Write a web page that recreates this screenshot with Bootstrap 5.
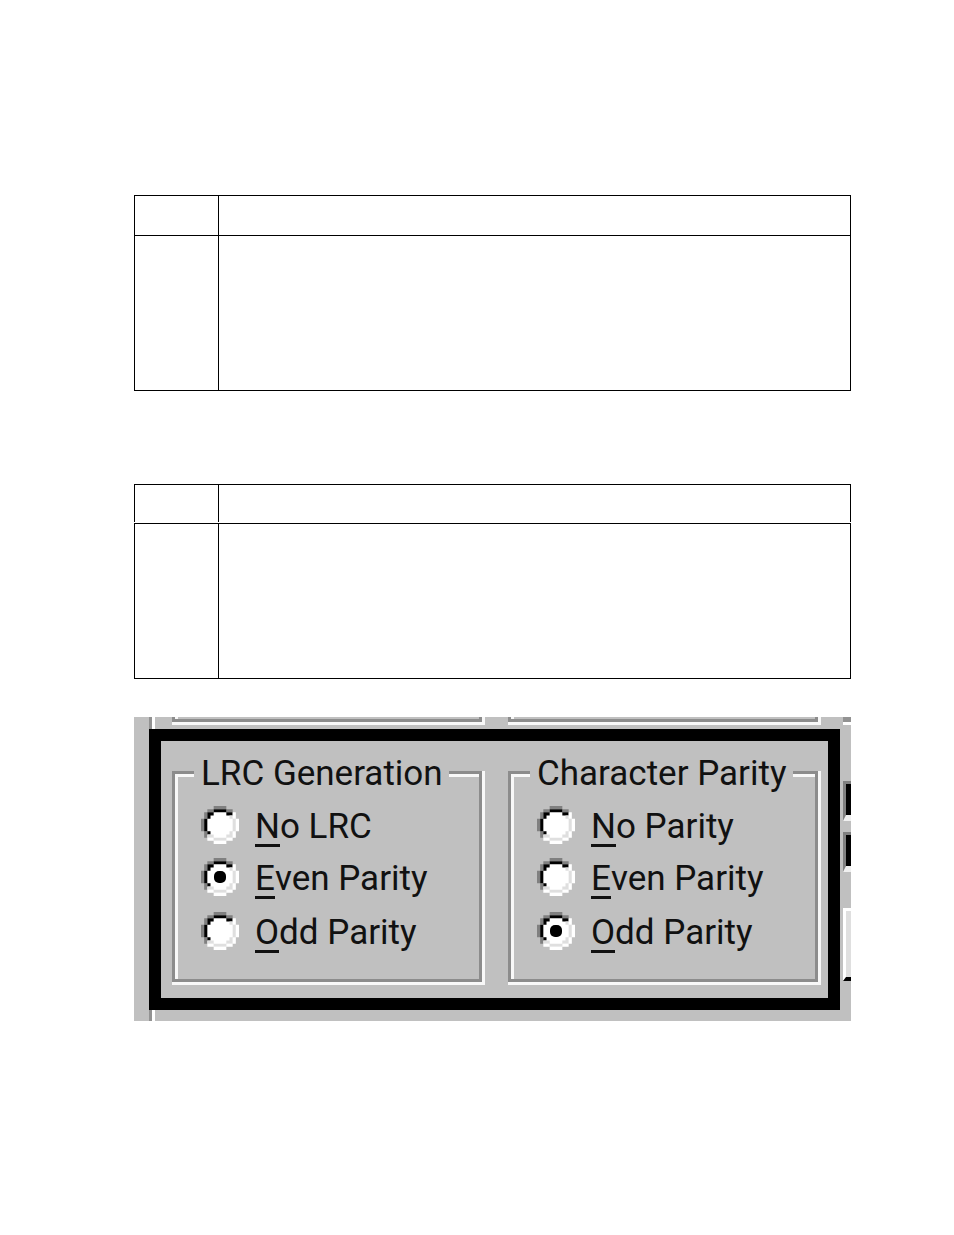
<!DOCTYPE html>
<html lang="en">
<head>
<meta charset="utf-8">
<meta name="viewport" content="width=device-width, initial-scale=1">
<title>LRC Generation and Character Parity</title>
<link href="https://cdn.jsdelivr.net/npm/bootstrap@5.3.0/dist/css/bootstrap.min.css" rel="stylesheet">
<style>
  body { background: #fff; color: #000; }
  .sheet { padding: 195px 103px 214px 134px; }

  .ruled { width: 100%; border-collapse: separate; border-spacing: 0; table-layout: fixed; border: 0 solid #000; border-bottom-width: 1px; }
  .ruled .key-col { width: 84px; }
  .ruled th, .ruled td { border: solid #000; border-width: 1px 0 0 1px; padding: 0; }
  .ruled th:last-child, .ruled td:last-child { border-right-width: 1px; }
  .ruled th { height: 40px; }
  .ruled td { height: 155px; }
  .ruled-first { margin-bottom: 93px; }
  .ruled-second { margin-bottom: 38px; }
  /* the header's upright rules stop just above the row below */
  .ruled-second th, .ruled-second th:last-child {
    height: 39px; border-width: 1px 0 0;
    background: linear-gradient(#000, #000) left top / 1px calc(100% - 1px) no-repeat, linear-gradient(#000, #000) right top / var(--end, 0) calc(100% - 1px) no-repeat;
  }
  .ruled-second th:last-child { --end: 1px; }

  .win { background: #c0c0c0; font-family: Roboto, sans-serif; font-size: 35px; line-height: 46px; color: #111; }
  .win-left { width: 15px; }
  .win-main { flex: 1 1 0; min-width: 0; }
  .win-right { width: 11px; padding-left: 3px; }
  .strip, .strip-bottom { border-left: 3px solid #929292; box-shadow: inset 3px 0 #fff; }
  .strip { height: 12px; padding: 0 19px 0 20px; gap: 23px; }
  .strip-bottom { height: 11px; }
  .etched {
    flex: 1 1 0; min-width: 0; border: 6px solid #808080;
    border-image: url("data:image/svg+xml,%3Csvg xmlns='http://www.w3.org/2000/svg' width='30' height='30' fill-rule='evenodd'%3E%3Cpath fill='%23f8f8f8' d='M0 0h30v30H0zM6 6v18h18V6z'/%3E%3Cpath fill='%238c8c8c' d='M0 0h27v27H0zM3 3v21h21V3z'/%3E%3C/svg%3E") 6;
  }
  .box-end { height: 8px; border-top: 0; }

  .marked { border: 12px solid #000; padding: 10px 7px 13px 11px; gap: 23px; }
  .group { padding: 0 0 20px 23px; }
  .group legend { font-size: inherit; line-height: inherit; margin: 0 0 2px -7px; padding: 0 6px 0 7px; white-space: nowrap; }
  .choices { display: grid; grid-template-rows: 52px 52px 56px; }
  .choices label { white-space: nowrap; }
  .choices span { padding-top: 4px; }
  .choices u { text-decoration: none; border-bottom: 3px solid #111; display: inline-block; line-height: 34px; }
  .dial {
    appearance: none; flex: none; width: 38px; height: 38px; margin: 0 16px 0 0;
    background: center / 100% 100% no-repeat url("data:image/svg+xml,%3Csvg xmlns='http://www.w3.org/2000/svg' viewBox='0 0 12 12'%3E%3Cpath fill='%23fff' d='M4 1h4v1h2v2h1v4h-1v2h-2v1H4v-1H2V8H1V4h1V2h2z'/%3E%3Cpath fill='%23808080' d='M4 0h4v1H4zM2 1h2v1H2zM8 1h2v1H8zM1 2h1v2H1zM0 4h1v4H0zM1 8h1v2H1z'/%3E%3Cpath fill='%23000' d='M4 1h4v1H4zM2 2h2v1H2zM8 2h2v1H8zM2 3h1v1H2zM1 4h1v4H1zM2 8h1v1H2z'/%3E%3Cpath fill='%23dfdfdf' d='M9 3h1v1H9zM10 4h1v4h-1zM9 8h1v1H9zM2 9h2v1H2zM8 9h2v1H8zM4 10h4v1H4z'/%3E%3Cpath fill='%23fff' d='M10 2h1v2h-1zM11 4h1v4h-1zM10 8h1v2h-1zM8 10h2v1H8zM2 10h2v1H2zM4 11h4v1H4z'/%3E%3C/svg%3E");
  }
  .dial:checked::before { content: ""; display: block; width: 12px; height: 12px; margin: 13px; border-radius: 5px; background: #000; }

  .side-corner { height: 8px; border: solid #fff; border-width: 0 0 3px 0; background: #929292; margin-bottom: 56px; }
  .side-field { height: 40px; background: #000; border: solid #808080; border-width: 3px 0 0 3px; border-bottom: 6px solid #f0f0f0; margin-bottom: 11px; }
  .side-button { height: 73px; margin-top: 36px; background: #dfdfdf; border: solid #fff; border-width: 3px 0 4px 3px; border-bottom-color: #000; }
</style>
</head>
<body>
<main class="sheet">
  <table class="ruled ruled-first">
    <colgroup><col class="key-col"><col></colgroup>
    <thead><tr><th></th><th></th></tr></thead>
    <tbody><tr><td></td><td></td></tr></tbody>
  </table>
  <table class="ruled ruled-second">
    <colgroup><col class="key-col"><col></colgroup>
    <thead><tr><th></th><th></th></tr></thead>
    <tbody><tr><td></td><td></td></tr></tbody>
  </table>

  <section class="win d-flex overflow-hidden">
    <div class="win-left flex-shrink-0"></div>
    <div class="win-main">
      <div class="strip d-flex">
        <div class="etched box-end"></div>
        <div class="etched box-end"></div>
      </div>
      <form class="marked d-flex">
        <fieldset class="group etched">
          <legend class="float-none w-auto">LRC Generation</legend>
          <div class="choices">
            <label class="d-flex align-items-center" for="lrc-no"><input class="dial" type="radio" name="lrc" id="lrc-no"><span><u>N</u>o LRC</span></label>
            <label class="d-flex align-items-center" for="lrc-even"><input class="dial" type="radio" name="lrc" id="lrc-even" checked><span><u>E</u>ven Parity</span></label>
            <label class="d-flex align-items-center" for="lrc-odd"><input class="dial" type="radio" name="lrc" id="lrc-odd"><span><u>O</u>dd Parity</span></label>
          </div>
        </fieldset>
        <fieldset class="group etched">
          <legend class="float-none w-auto">Character Parity</legend>
          <div class="choices">
            <label class="d-flex align-items-center" for="par-no"><input class="dial" type="radio" name="parity" id="par-no"><span><u>N</u>o Parity</span></label>
            <label class="d-flex align-items-center" for="par-even"><input class="dial" type="radio" name="parity" id="par-even"><span><u>E</u>ven Parity</span></label>
            <label class="d-flex align-items-center" for="par-odd"><input class="dial" type="radio" name="parity" id="par-odd" checked><span><u>O</u>dd Parity</span></label>
          </div>
        </fieldset>
      </form>
      <div class="strip-bottom"></div>
    </div>
    <div class="win-right flex-shrink-0">
      <div class="side-corner"></div>
      <div class="side-field"></div>
      <div class="side-field"></div>
      <div class="side-button"></div>
    </div>
  </section>
</main>
<script src="https://cdn.jsdelivr.net/npm/bootstrap@5.3.0/dist/js/bootstrap.bundle.min.js"></script>
</body>
</html>
